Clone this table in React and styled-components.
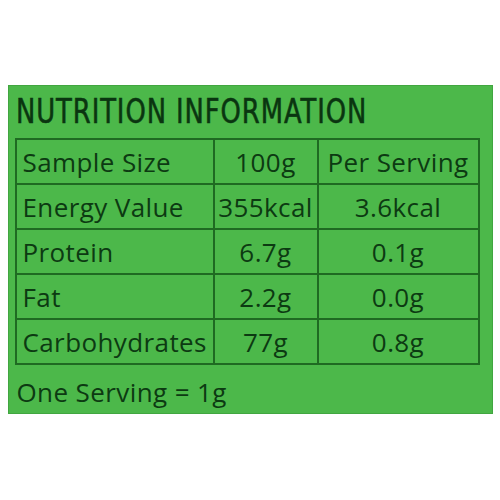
import React from "react";
import styled, { createGlobalStyle } from "styled-components";

const GlobalStyle = createGlobalStyle`
  html, body {
    margin: 0;
    padding: 0;
    background: #ffffff;
  }
  body {
    width: 500px;
    height: 500px;
    overflow: hidden;
  }
`;

const Page = styled.div`
  width: 500px;
  height: 500px;
  display: flex;
  align-items: flex-start;
  justify-content: center;
  padding-top: 85px;
  box-sizing: border-box;
`;

const Panel = styled.div`
  width: 485px;
  height: 329px;
  box-sizing: border-box;
  background: #4cb84a;
  border: 1px solid #41a640;
  padding: 5px 13px 0 6px;
  color: #0c3a12;
  font-family: "Open Sans", "Liberation Sans", sans-serif;
`;

const Title = styled.h1`
  margin: 0 0 0 1px;
  font-family: "DejaVu Sans", "Liberation Sans", sans-serif;
  font-weight: 400;
  font-size: 34px;
  line-height: 40px;
  letter-spacing: 1.2px;
  color: #0a3510;
  -webkit-text-stroke: 0.6px #0a3510;
  transform: scaleX(0.76);
  transform-origin: left center;
  white-space: nowrap;
  height: 40px;
`;

const Table = styled.table`
  border-collapse: collapse;
  width: 465px;
  margin-top: 7px;
`;

const Cell = styled.td`
  border: 2px solid #1f6a22;
  height: 43px;
  padding: 0 0 0 ${(p) => (p.$label ? "6px" : "0")};
  text-align: ${(p) => (p.$label ? "left" : "center")};
  width: ${(p) => p.$w};
  font-size: 26px;
  font-weight: 500;
  line-height: 30px;
  letter-spacing: 0.4px;
  white-space: nowrap;
`;

const Footer = styled.div`
  font-size: 26px;
  font-weight: 500;
  line-height: 30px;
  margin: 12px 0 0 2px;
  letter-spacing: 0.4px;
`;

const rows = [
  ["Sample Size", "100g", "Per Serving"],
  ["Energy Value", "355kcal", "3.6kcal"],
  ["Protein", "6.7g", "0.1g"],
  ["Fat", "2.2g", "0.0g"],
  ["Carbohydrates", "77g", "0.8g"],
];

export default function App() {
  return (
    <>
      <GlobalStyle />
      <Page>
        <Panel>
          <Title>NUTRITION INFORMATION</Title>
          <Table>
            <tbody>
              {rows.map((r) => (
                <tr key={r[0]}>
                  <Cell $label $w="190px">{r[0]}</Cell>
                  <Cell $w="102px">{r[1]}</Cell>
                  <Cell>{r[2]}</Cell>
                </tr>
              ))}
            </tbody>
          </Table>
          <Footer>One Serving = 1g</Footer>
        </Panel>
      </Page>
    </>
  );
}
